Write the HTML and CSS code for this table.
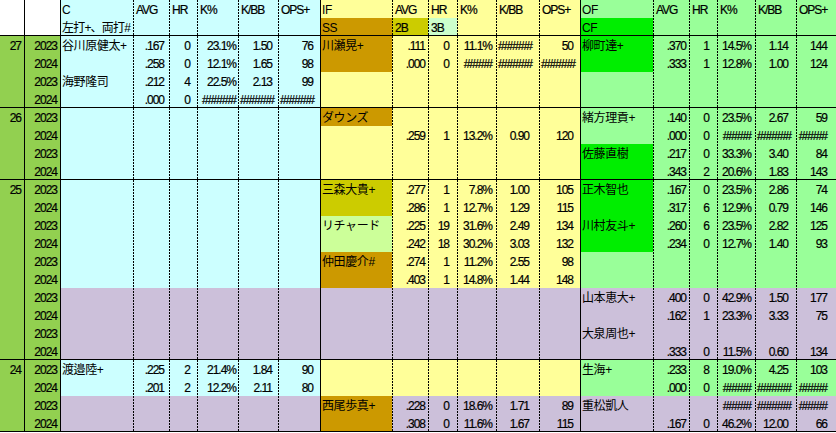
FILE: index.html
```html
<!DOCTYPE html>
<html lang="ja">
<head>
<meta charset="utf-8">
<title>Roster</title>
<link rel="stylesheet" href="styles.css">
</head>
<body>
<table class="sheet">
<colgroup>
<col class="w24"><col class="w36">
<col class="cg w73"><col class="cg w36"><col class="cg w28"><col class="cg w41"><col class="cg w40"><col class="cg w42">
<col class="ig w72"><col class="ig w36"><col class="ig w29"><col class="ig w39"><col class="ig w43"><col class="ig w41">
<col class="og w73"><col class="og w36"><col class="og w28"><col class="og w38"><col class="og w41"><col class="og w40">
</colgroup>
<tbody>
<tr class="hd"><td></td><td></td><td>C</td><td>AVG</td><td>HR</td><td>K%</td><td>K/BB</td><td>OPS+</td><td>IF</td><td>AVG</td><td>HR</td><td>K%</td><td>K/BB</td><td>OPS+</td><td>OF</td><td>AVG</td><td>HR</td><td>K%</td><td>K/BB</td><td>OPS+</td></tr>
<tr class="hd end"><td></td><td></td><td class="tight">左打+、両打#</td><td></td><td></td><td></td><td></td><td></td><td class="brn">SS</td><td class="olv">2B</td><td class="lgr">3B</td><td></td><td></td><td></td><td class="bgr">CF</td><td></td><td></td><td></td><td></td><td></td></tr>

<tr><td>27</td><td>2023</td><td>谷川原健太+</td><td>.167</td><td>0</td><td>23.1%</td><td>1.50</td><td>76</td><td class="brn">川瀬晃+</td><td>.111</td><td>0</td><td>11.1%</td><td>######</td><td>50</td><td class="bgr">柳町達+</td><td>.370</td><td>1</td><td>14.5%</td><td>1.14</td><td>144</td></tr>
<tr><td></td><td>2024</td><td></td><td>.258</td><td>0</td><td>12.1%</td><td>1.65</td><td>98</td><td class="brn"></td><td>.000</td><td>0</td><td>#####</td><td>######</td><td>######</td><td class="bgr"></td><td>.333</td><td>1</td><td>12.8%</td><td>1.00</td><td>124</td></tr>
<tr><td></td><td>2023</td><td>海野隆司</td><td>.212</td><td>4</td><td>22.5%</td><td>2.13</td><td>99</td><td></td><td></td><td></td><td></td><td></td><td></td><td></td><td></td><td></td><td></td><td></td><td></td></tr>
<tr class="end"><td></td><td>2024</td><td></td><td>.000</td><td>0</td><td>######</td><td>######</td><td>######</td><td></td><td></td><td></td><td></td><td></td><td></td><td></td><td></td><td></td><td></td><td></td><td></td></tr>

<tr><td>26</td><td>2023</td><td></td><td></td><td></td><td></td><td></td><td></td><td class="brn">ダウンズ</td><td></td><td></td><td></td><td></td><td></td><td>緒方理貢+</td><td>.140</td><td>0</td><td>23.5%</td><td>2.67</td><td>59</td></tr>
<tr><td></td><td>2024</td><td></td><td></td><td></td><td></td><td></td><td></td><td></td><td>.259</td><td>1</td><td>13.2%</td><td>0.90</td><td>120</td><td></td><td>.000</td><td>0</td><td>#####</td><td>######</td><td>#####</td></tr>
<tr><td></td><td>2023</td><td></td><td></td><td></td><td></td><td></td><td></td><td></td><td></td><td></td><td></td><td></td><td></td><td class="bgr">佐藤直樹</td><td>.217</td><td>0</td><td>33.3%</td><td>3.40</td><td>84</td></tr>
<tr class="end"><td></td><td>2024</td><td></td><td></td><td></td><td></td><td></td><td></td><td></td><td></td><td></td><td></td><td></td><td></td><td class="bgr"></td><td>.343</td><td>2</td><td>20.6%</td><td>1.83</td><td>143</td></tr>

<tr><td>25</td><td>2023</td><td></td><td></td><td></td><td></td><td></td><td></td><td class="olv">三森大貴+</td><td>.277</td><td>1</td><td>7.8%</td><td>1.00</td><td>105</td><td class="bgr">正木智也</td><td>.167</td><td>0</td><td>23.5%</td><td>2.86</td><td>74</td></tr>
<tr><td></td><td>2024</td><td></td><td></td><td></td><td></td><td></td><td></td><td class="olv"></td><td>.286</td><td>1</td><td>12.7%</td><td>1.29</td><td>115</td><td class="bgr"></td><td>.317</td><td>6</td><td>12.9%</td><td>0.79</td><td>146</td></tr>
<tr><td></td><td>2023</td><td></td><td></td><td></td><td></td><td></td><td></td><td class="lyg">リチャード</td><td>.225</td><td>19</td><td>31.6%</td><td>2.49</td><td>134</td><td class="bgr">川村友斗+</td><td>.260</td><td>6</td><td>23.5%</td><td>2.82</td><td>125</td></tr>
<tr><td></td><td>2024</td><td></td><td></td><td></td><td></td><td></td><td></td><td class="lyg"></td><td>.242</td><td>18</td><td>30.2%</td><td>3.03</td><td>132</td><td class="bgr"></td><td>.234</td><td>0</td><td>12.7%</td><td>1.40</td><td>93</td></tr>
<tr><td></td><td>2023</td><td></td><td></td><td></td><td></td><td></td><td></td><td class="brn">仲田慶介#</td><td>.274</td><td>1</td><td>11.2%</td><td>2.55</td><td>98</td><td></td><td></td><td></td><td></td><td></td><td></td></tr>
<tr><td></td><td>2024</td><td></td><td></td><td></td><td></td><td></td><td></td><td class="brn"></td><td>.403</td><td>1</td><td>14.8%</td><td>1.44</td><td>148</td><td></td><td></td><td></td><td></td><td></td><td></td></tr>
<tr class="pur"><td></td><td>2023</td><td></td><td></td><td></td><td></td><td></td><td></td><td></td><td></td><td></td><td></td><td></td><td></td><td>山本恵大+</td><td>.400</td><td>0</td><td>42.9%</td><td>1.50</td><td>177</td></tr>
<tr class="pur"><td></td><td>2024</td><td></td><td></td><td></td><td></td><td></td><td></td><td></td><td></td><td></td><td></td><td></td><td></td><td></td><td>.162</td><td>1</td><td>23.3%</td><td>3.33</td><td>75</td></tr>
<tr class="pur"><td></td><td>2023</td><td></td><td></td><td></td><td></td><td></td><td></td><td></td><td></td><td></td><td></td><td></td><td></td><td>大泉周也+</td><td></td><td></td><td></td><td></td><td></td></tr>
<tr class="pur end"><td></td><td>2024</td><td></td><td></td><td></td><td></td><td></td><td></td><td></td><td></td><td></td><td></td><td></td><td></td><td></td><td>.333</td><td>0</td><td>11.5%</td><td>0.60</td><td>134</td></tr>

<tr><td>24</td><td>2023</td><td>渡邉陸+</td><td>.225</td><td>2</td><td>21.4%</td><td>1.84</td><td>90</td><td></td><td></td><td></td><td></td><td></td><td></td><td>生海+</td><td>.233</td><td>8</td><td>19.0%</td><td>4.25</td><td>103</td></tr>
<tr><td></td><td>2024</td><td></td><td>.201</td><td>2</td><td>12.2%</td><td>2.11</td><td>80</td><td></td><td></td><td></td><td></td><td></td><td></td><td></td><td>.000</td><td>0</td><td>#####</td><td>######</td><td>#####</td></tr>
<tr class="pur"><td></td><td>2023</td><td></td><td></td><td></td><td></td><td></td><td></td><td class="brn">西尾歩真+</td><td>.228</td><td>0</td><td>18.6%</td><td>1.71</td><td>89</td><td>重松凱人</td><td></td><td></td><td>#####</td><td>######</td><td>#####</td></tr>
<tr class="pur end"><td></td><td>2024</td><td></td><td></td><td></td><td></td><td></td><td></td><td class="brn"></td><td>.308</td><td>0</td><td>11.6%</td><td>1.67</td><td>115</td><td></td><td>.167</td><td>0</td><td>46.2%</td><td>12.00</td><td>66</td></tr>
</tbody>
</table>
</body>
</html>
```
FILE: styles.css
```css
html, body {
  margin: 0;
  padding: 0;
  background: #fff;
  overflow: hidden;
}

.sheet {
  border-collapse: separate;
  border-spacing: 0;
  table-layout: fixed;
  width: 836px;
  font-family: "Liberation Sans", "Noto Sans CJK JP", sans-serif;
  font-size: 12px;
  letter-spacing: -1px;
  color: #000;
  -webkit-text-stroke: 0.2px #000;
}

.w24 { width: 24px; }
.w28 { width: 28px; }
.w29 { width: 29px; }
.w36 { width: 36px; }
.w38 { width: 38px; }
.w39 { width: 39px; }
.w40 { width: 40px; }
.w41 { width: 41px; }
.w42 { width: 42px; }
.w43 { width: 43px; }
.w72 { width: 72px; }
.w73 { width: 73px; }

.cg { background-color: #ccffff; }
.ig { background-color: #ffff99; }
.og { background-color: #99ff99; }

.sheet tr { height: 18px; }
.sheet tr.pur { background-color: #ccc0da; }

.sheet td {
  --vl: 0 0 #0000;
  --hl: 0 0 #0000;
  height: 16px;
  padding: 2px 6px 0 2px;
  line-height: 16px;
  white-space: nowrap;
  overflow: hidden;
  text-align: right;
  vertical-align: top;
  box-shadow: var(--vl), var(--hl);
}

/* age / year columns */
.sheet td:nth-child(-n+2) {
  background-color: #92d050;
  padding-right: 3px;
}
.sheet tr.hd td:nth-child(-n+2) { background-color: #fff; }

/* name columns */
.sheet td:nth-child(3),
.sheet td:nth-child(9),
.sheet td:nth-child(15) {
  text-align: left;
  padding-left: 2px;
  letter-spacing: -0.4px;
  -webkit-text-stroke: 0;
  --vl: inset 1px 0 #000;
}
.sheet td:nth-child(2) { --vl: inset 1px 0 #000; }

/* stat columns: dashed left rule */
.sheet td:nth-child(n+4):nth-child(-n+8),
.sheet td:nth-child(n+10):nth-child(-n+14),
.sheet td:nth-child(n+16) {
  background-image: linear-gradient(#000 2px, transparent 2px);
  background-size: 1px 3px;
  background-repeat: repeat-y;
  background-position: 0 0;
}

.sheet td:nth-child(4) { padding-right: 5px; }
.sheet td:nth-child(5) { padding-right: 7px; }
.sheet td:nth-child(6) { padding-right: 2px; }
.sheet td:nth-child(7) { padding-right: 6px; }
.sheet td:nth-child(8) { padding-right: 7px; }
.sheet td:nth-child(10) { padding-right: 3px; }
.sheet td:nth-child(11) { padding-right: 8px; }
.sheet td:nth-child(12) { padding-right: 4px; }
.sheet td:nth-child(13) { padding-right: 10px; }
.sheet td:nth-child(14) { padding-right: 7px; }
.sheet td:nth-child(16) { padding-right: 3px; }
.sheet td:nth-child(17) { padding-right: 8px; }
.sheet td:nth-child(18) { padding-right: 4px; }
.sheet td:nth-child(19) { padding-right: 8px; }
.sheet td:nth-child(20) { padding-right: 9px; }

.sheet tr.hd td { text-align: left; padding-left: 3px; }
.sheet tr.hd td:nth-child(6n+3) { padding-left: 2px; }
.sheet tr.hd td.tight { letter-spacing: -0.8px; padding-right: 0; }

.sheet tr.end td { --hl: inset 0 -1px #000; }

.brn { background-color: #cc9900; }
.olv { background-color: #cccc00; }
.lgr { background-color: #ccffcc; }
.lyg { background-color: #ccff99; }
.bgr { background-color: #00ee00; }
```
